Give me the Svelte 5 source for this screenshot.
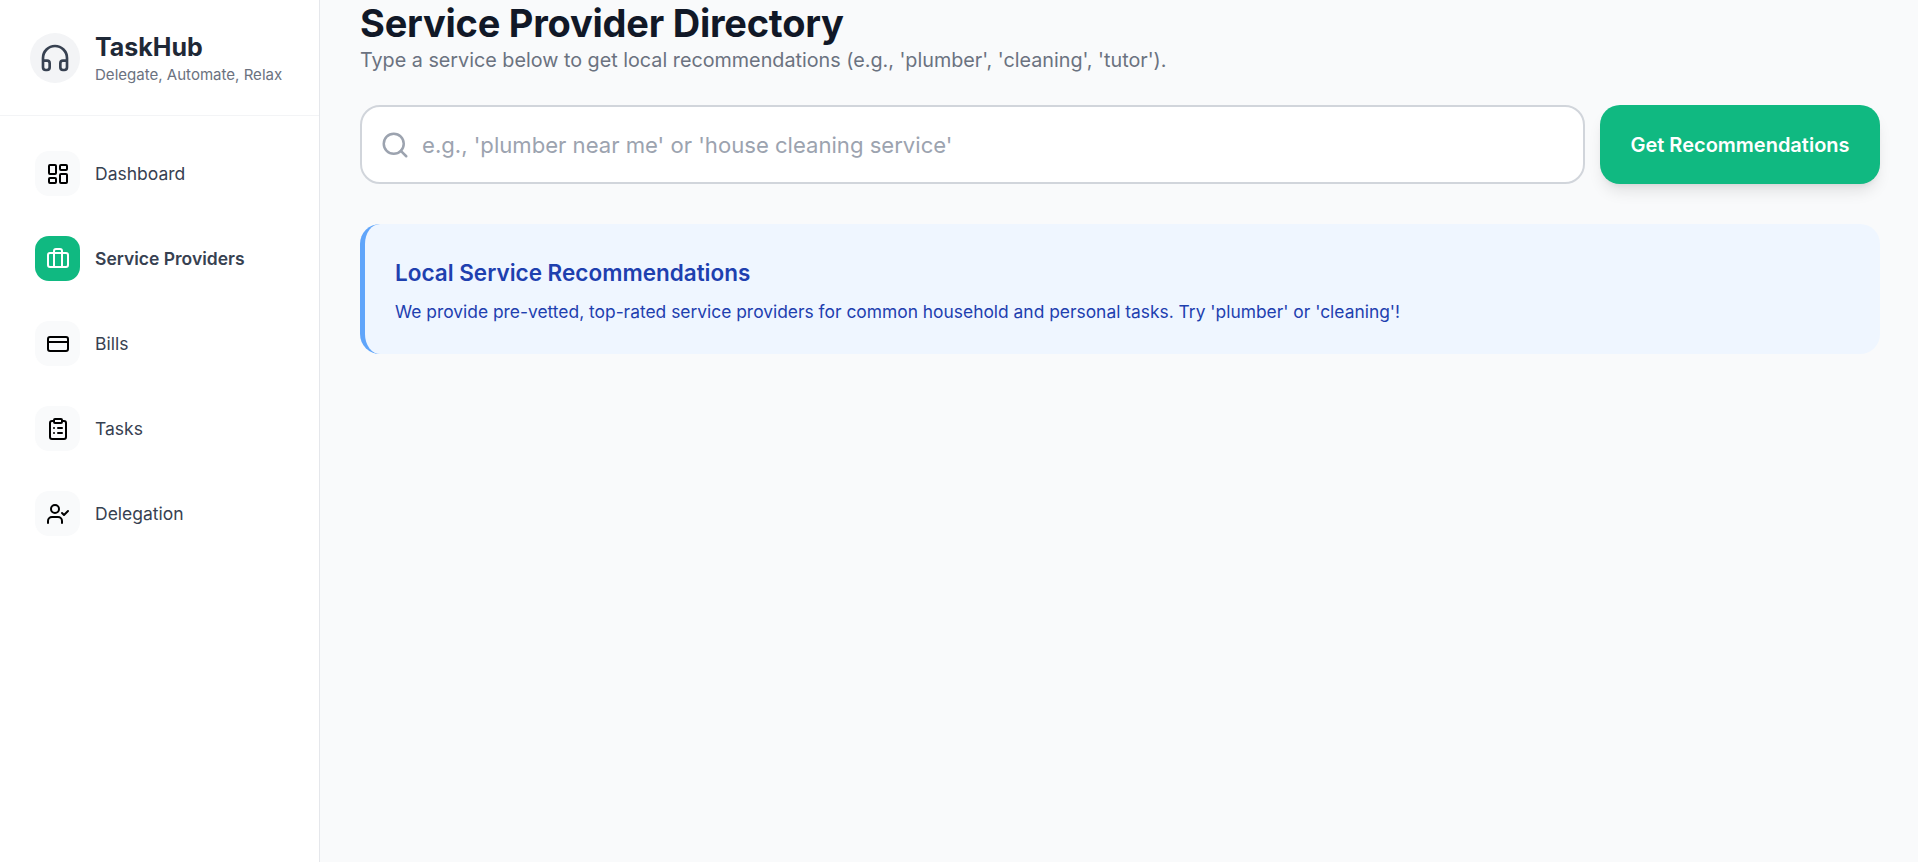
<script>
  const nav = ['Dashboard', 'Service Providers', 'Bills', 'Tasks', 'Delegation'];
</script>

<div class="layout">
  <aside class="sidebar">
    <header class="brand">
      <div class="logo">
        <svg width="32" height="32" viewBox="0 0 24 24" fill="none" stroke="#374151" stroke-width="2" stroke-linecap="round" stroke-linejoin="round"><path d="M3 14h3a2 2 0 0 1 2 2v3a2 2 0 0 1-2 2H5a2 2 0 0 1-2-2v-7a9 9 0 0 1 18 0v7a2 2 0 0 1-2 2h-1a2 2 0 0 1-2-2v-3a2 2 0 0 1 2-2h3"/></svg>
      </div>
      <div class="brand-text">
        <div class="name">TaskHub</div>
        <div class="tag">Delegate, Automate, Relax</div>
      </div>
    </header>
    <nav class="nav">
      {#each nav as item, i}
        <div class="item" class:active={i === 1}>
          <span class="ico">
            <svg width="24" height="24" viewBox="0 0 24 24" fill="none" stroke="currentColor" stroke-width="2" stroke-linecap="round" stroke-linejoin="round">
              {#if i === 0}
                <rect x="3" y="3" width="7" height="9" rx="1"/><rect x="14" y="3" width="7" height="5" rx="1"/><rect x="14" y="12" width="7" height="9" rx="1"/><rect x="3" y="16" width="7" height="5" rx="1"/>
              {:else if i === 1}
                <path d="M16 20V4a2 2 0 0 0-2-2h-4a2 2 0 0 0-2 2v16"/><rect x="2" y="6" width="20" height="14" rx="2"/>
              {:else if i === 2}
                <rect x="2" y="5" width="20" height="14" rx="2"/><path d="M2 10h20"/>
              {:else if i === 3}
                <rect x="8" y="2" width="8" height="4" rx="1"/><path d="M16 4h2a2 2 0 0 1 2 2v14a2 2 0 0 1-2 2H6a2 2 0 0 1-2-2V6a2 2 0 0 1 2-2h2"/><path d="M12 11h4"/><path d="M12 16h4"/><path d="M8 11h.01"/><path d="M8 16h.01"/>
              {:else}
                <path d="M16 21v-2a4 4 0 0 0-4-4H6a4 4 0 0 0-4 4v2"/><circle cx="9" cy="7" r="4"/><path d="m16 11 2 2 4-4"/>
              {/if}
            </svg>
          </span>
          <span class="label">{item}</span>
        </div>
      {/each}
    </nav>
  </aside>

  <main class="main">
    <h1>Service Provider Directory</h1>
    <p class="sub">Type a service below to get local recommendations (e.g., 'plumber', 'cleaning', 'tutor').</p>
    <div class="search">
      <div class="field">
        <svg width="30" height="30" viewBox="0 0 24 24" fill="none" stroke="#9ca3af" stroke-width="2" stroke-linecap="round" stroke-linejoin="round"><path d="m21 21-4.34-4.34"/><circle cx="11" cy="11" r="8"/></svg>
        <input type="text" placeholder="e.g., 'plumber near me' or 'house cleaning service'" />
      </div>
      <button type="button">Get Recommendations</button>
    </div>
    <section class="info">
      <h2>Local Service Recommendations</h2>
      <p>We provide pre-vetted, top-rated service providers for common household and personal tasks. Try 'plumber' or 'cleaning'!</p>
    </section>
  </main>
</div>

<style>
  :global(body) { margin: 0; background: #f9fafb; font-family: Inter, "Liberation Sans", sans-serif; }
  .layout { display: flex; height: 862px; overflow: hidden; }
  .sidebar { width: 320px; box-sizing: border-box; flex: none; background: #fff; border-right: 1px solid #e5e7eb; }
  .brand { height: 115px; box-sizing: content-box; display: flex; align-items: center; gap: 15px; padding: 0 30px; border-bottom: 1px solid #f3f4f6; }
  .brand-text { padding-top: 1px; }
  .logo { width: 50px; height: 50px; border-radius: 50%; background: #f3f4f6; display: flex; align-items: center; justify-content: center; flex: none; }
  .name { font-size: 25px; font-weight: 700; color: #1f2937; line-height: 31px; white-space: nowrap; }
  .tag { font-size: 15.05px; color: #6b7280; line-height: 20px; margin-top: 2px; white-space: nowrap; }
  .nav { display: flex; flex-direction: column; gap: 40px; padding: 35px 35px; }
  .item { display: flex; align-items: center; gap: 15px; height: 45px; color: #374151; font-size: 17.5px; }
  .ico { width: 45px; height: 45px; border-radius: 14px; background: #f9fafb; display: flex; align-items: center; justify-content: center; color: #000; flex: none; }
  .active { font-weight: 600; }
  .active .ico { background: #10b981; color: #fff; }
  .main { flex: 1; min-width: 0; padding: 0 38px 0 40px; }
  h1 { margin: 0; font-size: 38px; line-height: 46px; letter-spacing: -0.006em; font-weight: 700; color: #111827; }
  .sub { margin: 0; font-size: 19.75px; line-height: 28px; color: #6b7280; }
  .search { display: flex; gap: 15px; margin-top: 31px; }
  .field { flex: 1; height: 79px; box-sizing: border-box; display: flex; align-items: center; gap: 12px; padding: 0 18px; background: #fff; border: 2px solid #d1d5db; border-radius: 20px; }
  input { flex: 1; border: none; outline: none; background: transparent; font: inherit; font-size: 22.1px; color: #111827; padding: 0; }
  input::placeholder { color: #9ca3af; opacity: 1; }
  button { width: 280px; height: 79px; border: none; border-radius: 20px; background: #10b981; color: #fff; font: inherit; font-size: 20px; font-weight: 600; box-shadow: 0 10px 15px -3px rgba(0,0,0,.1), 0 4px 6px -4px rgba(0,0,0,.1); }
  .info { margin-top: 40px; padding: 35px 30px 0; height: 130px; box-sizing: border-box; background: #eff6ff; border-left: 5px solid #60a5fa; border-radius: 20px; color: #1e40af; }
  h2 { margin: 0 0 12px; font-size: 22.5px; line-height: 28px; font-weight: 600; }
  .info p { margin: 0; font-size: 17.4px; line-height: 26px; }
</style>
